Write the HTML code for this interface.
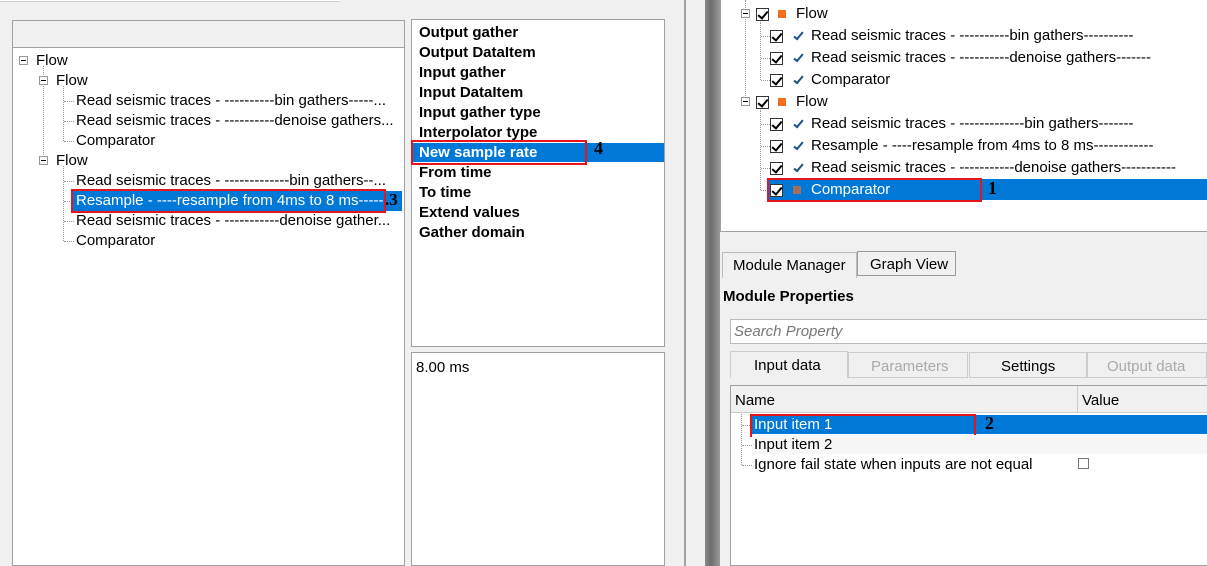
<!DOCTYPE html>
<html><head><style>
*{margin:0;padding:0;box-sizing:border-box}
body{width:1207px;height:566px;background:#f0f0f0;font-family:"Liberation Sans",sans-serif;font-size:15px;color:#000;position:relative;overflow:hidden}
.a{position:absolute;white-space:nowrap}
.t{line-height:20px;height:20px}
.b{font-weight:bold}
.sel{background:#0078d7;color:#fff}
.red{position:absolute;border:2px solid #e8141c}
.num{position:absolute;font-family:"Liberation Serif",serif;font-weight:bold;font-size:18px}
.cb{position:absolute;width:13px;height:13px;border:1px solid #333;background:#fff}
.cb:after{content:"";position:absolute;left:3px;top:0px;width:4px;height:8px;border:solid #000;border-width:0 2px 2px 0;transform:rotate(40deg)}
.ck{position:absolute;width:5px;height:10px;border:solid #1b4f8a;border-width:0 2px 2px 0;transform:rotate(40deg)}
.exp{position:absolute;width:9px;height:9px;border:1px solid #999;background:#fff}
.exp:after{content:"";position:absolute;left:1px;top:3px;width:5px;height:1px;background:#000}
.dv{position:absolute;border-left:1px dotted #999}
.dh{position:absolute;border-top:1px dotted #999}
</style></head><body>
<div class="a" style="left:0;top:0;width:340px;height:2px;background:#fff;border-bottom:1px solid #ccc"></div>
<!-- left panel -->
<div class="a" style="left:12px;top:20px;width:393px;height:546px;background:#fff;border:1px solid #a0a0a0"></div>
<div class="a" style="left:13px;top:21px;width:391px;height:27px;background:#f0f0f0;border-bottom:1px solid #a0a0a0"></div>
<div class="exp" style="left:19px;top:56px"></div>
<div class="a t" style="left:36px;top:51px">Flow</div>
<div class="dv" style="left:43px;top:66px;height:95px"></div>
<div class="exp" style="left:39px;top:76px"></div>
<div class="a t" style="left:56px;top:71px">Flow</div>
<div class="dv" style="left:63px;top:86px;height:55px"></div>
<div class="dh" style="left:64px;top:101px;width:10px"></div>
<div class="dh" style="left:64px;top:121px;width:10px"></div>
<div class="dh" style="left:64px;top:141px;width:10px"></div>
<div class="a t" style="left:76px;top:91px">Read seismic traces - ----------bin gathers-----...</div>
<div class="a t" style="left:76px;top:111px">Read seismic traces - ----------denoise gathers...</div>
<div class="a t" style="left:76px;top:131px">Comparator</div>
<div class="exp" style="left:39px;top:156px"></div>
<div class="a t" style="left:56px;top:151px">Flow</div>
<div class="dv" style="left:63px;top:166px;height:75px"></div>
<div class="dh" style="left:64px;top:181px;width:10px"></div>
<div class="dh" style="left:64px;top:201px;width:8px"></div>
<div class="dh" style="left:64px;top:221px;width:10px"></div>
<div class="dh" style="left:64px;top:241px;width:10px"></div>
<div class="a t" style="left:76px;top:171px">Read seismic traces - -------------bin gathers--...</div>
<div class="a t sel" style="left:72px;top:191px;width:330px;padding-left:4px;overflow:hidden">Resample - ----resample from 4ms to 8 ms-----</div>
<div class="red" style="left:71px;top:189px;width:315px;height:24px"></div>
<div class="num" style="left:385px;top:190px;font-size:17px">.3</div>
<div class="a t" style="left:76px;top:211px">Read seismic traces - -----------denoise gather...</div>
<div class="a t" style="left:76px;top:231px">Comparator</div>
<!-- middle -->
<div class="a" style="left:411px;top:19px;width:254px;height:328px;background:#fff;border:1px solid #a0a0a0"></div>
<div class="a b" style="left:419px;top:23px;line-height:20px">Output gather<br>Output DataItem<br>Input gather<br>Input DataItem<br>Input gather type<br>Interpolator type</div>
<div class="a t b sel" style="left:412px;top:143px;width:252px;padding-left:7px;height:19px">New sample rate</div>
<div class="red" style="left:411px;top:140px;width:176px;height:25px"></div>
<div class="num" style="left:594px;top:138px">4</div>
<div class="a b" style="left:419px;top:163px;line-height:20px">From time<br>To time<br>Extend values<br>Gather domain</div>
<div class="a" style="left:411px;top:352px;width:254px;height:214px;background:#fff;border:1px solid #a0a0a0"></div>
<div class="a t" style="left:416px;top:358px">8.00 ms</div>
<!-- splitter -->
<div class="a" style="left:684px;top:0;width:2px;height:566px;background:#a0a0a0"></div>
<div class="a" style="left:705px;top:0;width:15px;height:566px;background:linear-gradient(90deg,#8a8a8a,#6e6e6e 40%,#9a9a9a)"></div>
<!-- right tree -->
<div class="a" style="left:720px;top:0;width:487px;height:232px;background:#fff;border-left:1px solid #a0a0a0;border-bottom:1px solid #a0a0a0"></div>
<div class="dv" style="left:745px;top:0;height:102px"></div>
<div class="exp" style="left:741px;top:9px"></div>
<div class="cb" style="left:756px;top:8px"></div>
<div class="a" style="left:778px;top:10px;width:8px;height:8px;background:#f07020"></div>
<div class="a t" style="left:796px;top:4px">Flow</div>
<div class="dv" style="left:760px;top:22px;height:58px"></div>
<div class="dh" style="left:761px;top:36px;width:9px"></div>
<div class="dh" style="left:761px;top:58px;width:9px"></div>
<div class="dh" style="left:761px;top:80px;width:9px"></div>
<div class="cb" style="left:770px;top:30px"></div><div class="ck" style="left:796px;top:30px"></div>
<div class="a t" style="left:811px;top:26px">Read seismic traces - ----------bin gathers----------</div>
<div class="cb" style="left:770px;top:52px"></div><div class="ck" style="left:796px;top:52px"></div>
<div class="a t" style="left:811px;top:48px">Read seismic traces - ----------denoise gathers-------</div>
<div class="cb" style="left:770px;top:74px"></div><div class="ck" style="left:796px;top:74px"></div>
<div class="a t" style="left:811px;top:70px">Comparator</div>
<div class="exp" style="left:741px;top:97px"></div>
<div class="cb" style="left:756px;top:96px"></div>
<div class="a" style="left:778px;top:98px;width:8px;height:8px;background:#f07020"></div>
<div class="a t" style="left:796px;top:92px">Flow</div>
<div class="dv" style="left:760px;top:110px;height:80px"></div>
<div class="dh" style="left:761px;top:124px;width:9px"></div>
<div class="dh" style="left:761px;top:146px;width:9px"></div>
<div class="dh" style="left:761px;top:168px;width:9px"></div>
<div class="dh" style="left:761px;top:190px;width:9px"></div>
<div class="cb" style="left:770px;top:118px"></div><div class="ck" style="left:796px;top:118px"></div>
<div class="a t" style="left:811px;top:114px">Read seismic traces - -------------bin gathers-------</div>
<div class="cb" style="left:770px;top:140px"></div><div class="ck" style="left:796px;top:140px"></div>
<div class="a t" style="left:811px;top:136px">Resample - ----resample from 4ms to 8 ms------------</div>
<div class="cb" style="left:770px;top:162px"></div><div class="ck" style="left:796px;top:162px"></div>
<div class="a t" style="left:811px;top:158px">Read seismic traces - -----------denoise gathers-----------</div>
<div class="a sel" style="left:768px;top:179px;width:439px;height:21px"></div>
<div class="cb" style="left:770px;top:184px"></div>
<div class="a" style="left:793px;top:186px;width:8px;height:8px;background:#a07060"></div>
<div class="a t" style="left:811px;top:180px;color:#fff">Comparator</div>
<div class="red" style="left:767px;top:178px;width:215px;height:24px"></div>
<div class="num" style="left:988px;top:178px">1</div>
<!-- tabs -->
<div class="a" style="left:722px;top:252px;width:135px;height:26px;background:#f0f0f0;border:1px solid #bbb;border-bottom:none;padding:4px 0 0 10px">Module Manager</div>
<div class="a" style="left:857px;top:251px;width:99px;height:25px;background:#f0f0f0;border:1px solid #999;padding:4px 0 0 12px">Graph View</div>
<div class="a b" style="left:723px;top:288px">Module Properties</div>
<div class="a" style="left:730px;top:319px;width:480px;height:25px;background:#fff;border:1px solid #bbb;padding:3px 0 0 3px;color:#777;font-style:italic">Search Property</div>
<div class="a" style="left:730px;top:351px;width:118px;height:27px;background:#f0f0f0;border:1px solid #ccc;border-bottom:none;padding:5px 0 0 23px">Input data</div>
<div class="a" style="left:848px;top:352px;width:120px;height:26px;border:1px solid #ccc;padding:5px 0 0 22px;color:#aaa">Parameters</div>
<div class="a" style="left:969px;top:352px;width:118px;height:26px;border:1px solid #ccc;padding:5px 0 0 31px">Settings</div>
<div class="a" style="left:1087px;top:352px;width:120px;height:26px;border:1px solid #ccc;padding:5px 0 0 19px;color:#aaa">Output data</div>
<div class="a" style="left:730px;top:385px;width:480px;height:181px;background:#fff;border:1px solid #a0a0a0"></div>
<div class="a" style="left:731px;top:386px;width:476px;height:27px;background:#f0f0f0;border-bottom:1px solid #ccc"></div>
<div class="a" style="left:1077px;top:386px;width:1px;height:27px;background:#ccc"></div>
<div class="a t" style="left:735px;top:391px">Name</div>
<div class="a t" style="left:1082px;top:391px">Value</div>
<div class="dv" style="left:741px;top:414px;height:51px"></div>
<div class="dh" style="left:742px;top:425px;width:10px"></div>
<div class="dh" style="left:742px;top:445px;width:10px"></div>
<div class="dh" style="left:742px;top:465px;width:10px"></div>
<div class="a sel" style="left:752px;top:415px;width:455px;height:19px"></div>
<div class="a t" style="left:754px;top:415px;color:#fff">Input item 1</div>
<div class="red" style="left:750px;top:414px;width:226px;height:23px"></div>
<div class="num" style="left:985px;top:413px">2</div>
<div class="a" style="left:752px;top:435px;width:455px;height:19px;background:#f7f7f7"></div>
<div class="a t" style="left:754px;top:435px">Input item 2</div>
<div class="a t" style="left:754px;top:455px">Ignore fail state when inputs are not equal</div>
<div class="a" style="left:1078px;top:458px;width:11px;height:11px;border:1px solid #777;background:#fff"></div>
</body></html>
